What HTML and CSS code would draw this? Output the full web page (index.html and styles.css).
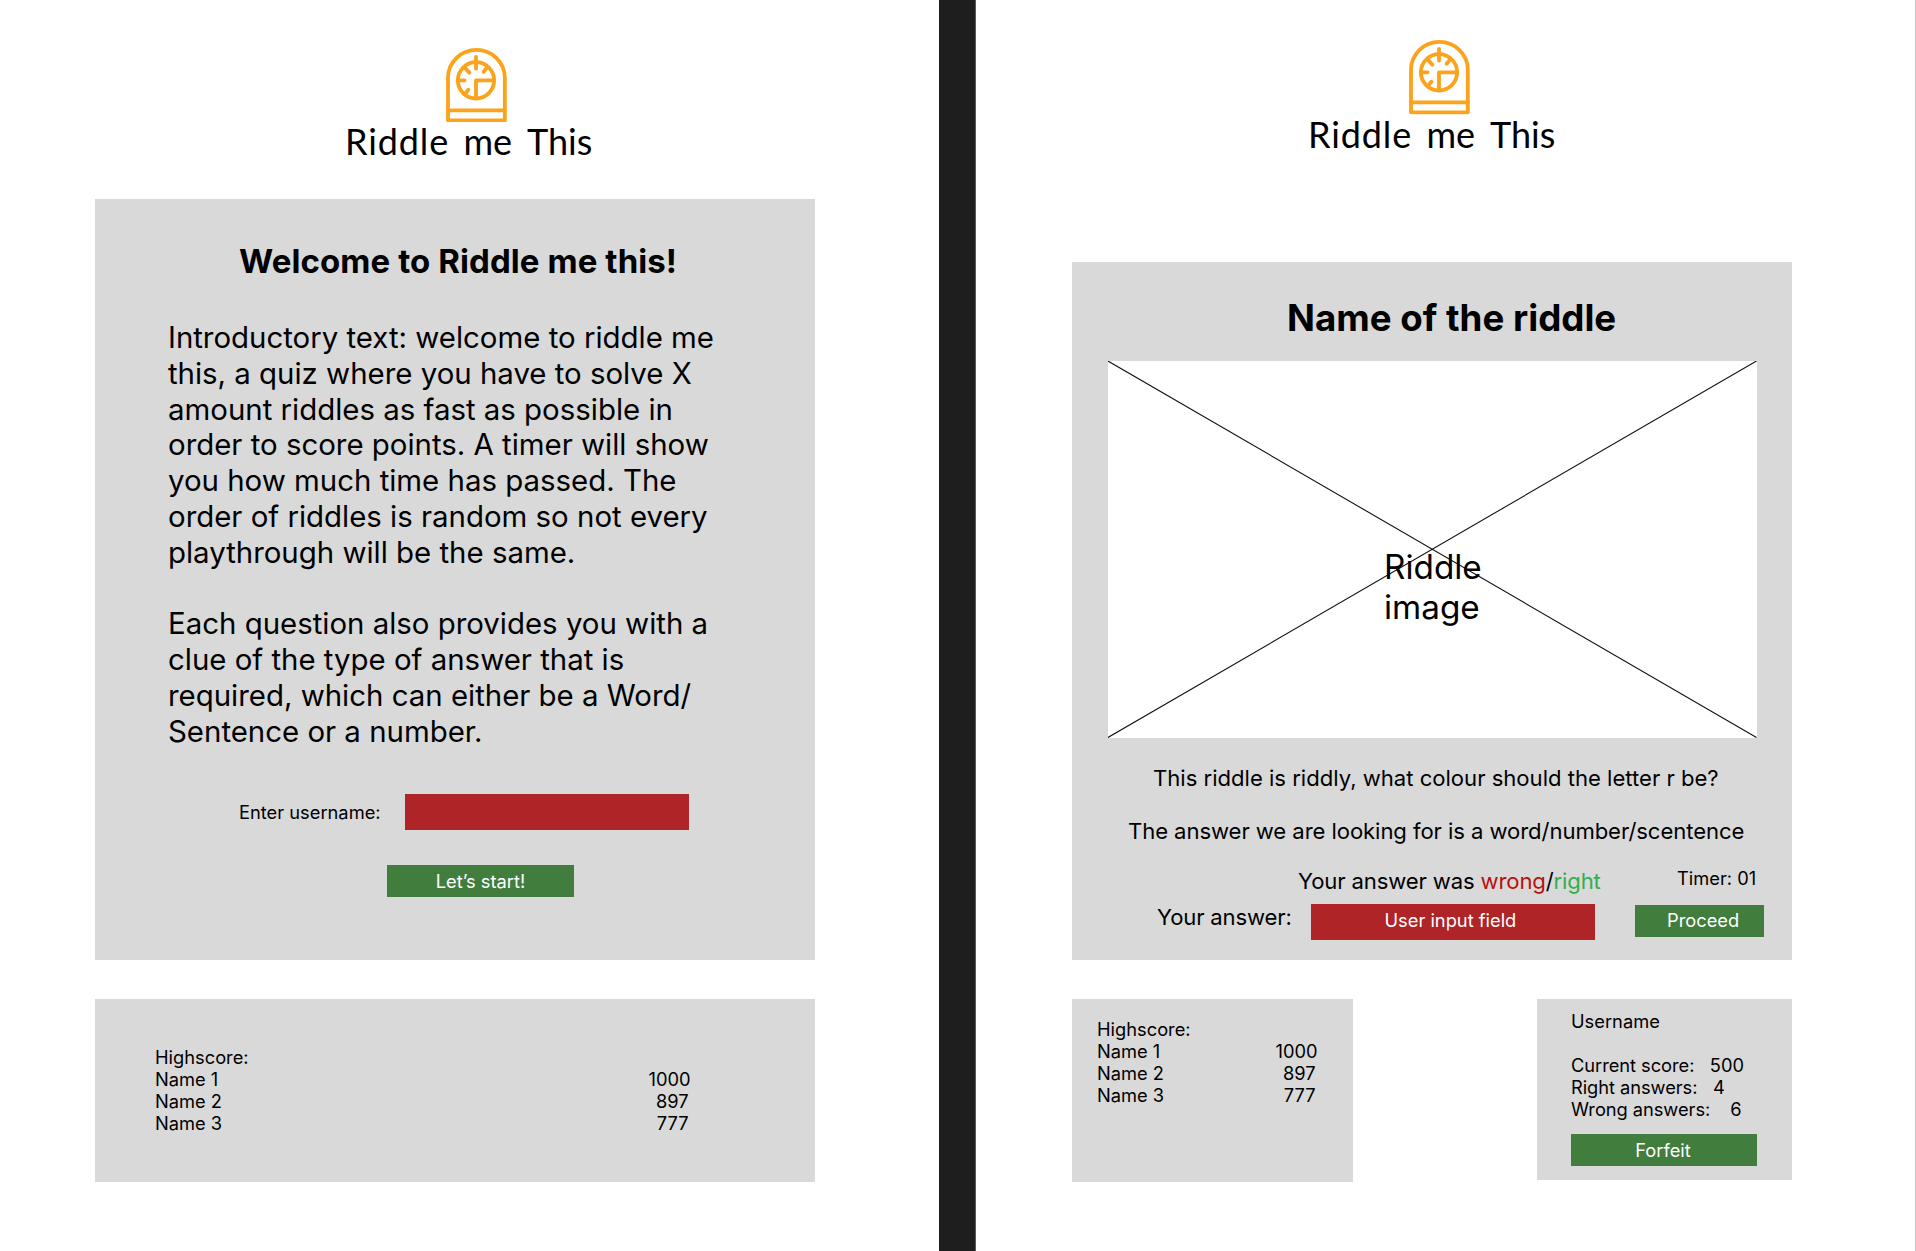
FILE: index.html
```html
<!DOCTYPE html>
<html lang="en">
<head>
<meta charset="utf-8">
<title>Riddle me This</title>
<link rel="stylesheet" href="styles.css">
</head>
<body>
<svg class="symbols" aria-hidden="true">
  <symbol id="clock" viewBox="348 53 183 224">
    <g fill="none" stroke="#fba31b" stroke-width="11.5" stroke-linecap="round" stroke-linejoin="round">
      <path d="M354 270V142a85 83 0 0 1 170.500 0V270Z"/>
      <path d="M354 240H524"/>
      <circle cx="438" cy="150" r="54.500"/>
      <path d="M438 80V115M438 198V150H488M405 113L418 127M470 113L461 124M387 150H404M405 190L415 178"/>
    </g>
  </symbol>
</svg>
<main class="screens">
  <section class="screen start">
    <header class="brand">
      <svg class="brand-icon"><use href="#clock"/></svg>
      <div class="brand-name"><span class="w1">Riddle</span><span class="w2">me</span><span class="w3">This</span></div>
    </header>
    <article class="panel welcome">
      <h1 class="welcome-title">Welcome to Riddle me this!</h1>
      <p class="intro">Introductory text: welcome to riddle me<br>this, a quiz where you have to solve X<br>amount riddles as fast as possible in<br>order to score points. A timer will show<br>you how much time has passed. The<br>order of riddles is random so not every<br>playthrough will be the same.</p>
      <p class="intro">Each question also provides you with a<br>clue of the type of answer that is<br>required, which can either be a Word/<br>Sentence or a number.</p>
      <div class="username-row">
        <span class="username-label">Enter username:</span>
        <div class="field"></div>
      </div>
      <div class="button start-button">Let’s start!</div>
    </article>
    <section class="panel scores wide">
      <div class="names">Highscore:<br>Name 1<br>Name 2<br>Name 3</div>
      <div class="points"><span>1000</span><span class="short">897</span><span class="short">777</span></div>
    </section>
  </section>
  <section class="screen game">
    <header class="brand">
      <svg class="brand-icon"><use href="#clock"/></svg>
      <div class="brand-name"><span class="w1">Riddle</span><span class="w2">me</span><span class="w3">This</span></div>
    </header>
    <article class="panel riddle">
      <h1 class="riddle-title">Name of the riddle</h1>
      <div class="picture">
        <svg class="cross" viewBox="0 0 649 377" preserveAspectRatio="none"><path d="M0 0L648.500 376.500M0 376.500L648.500 0" stroke="#111" stroke-width="1.100"/></svg>
        <div class="picture-label">Riddle<br>image</div>
      </div>
      <p class="question">This riddle is riddly, what colour should the letter r be?</p>
      <p class="hint">The answer we are looking for is a word/number/scentence</p>
      <div class="status-row">
        <span class="result">Your answer was <span class="wrong">wrong</span>/<span class="right">right</span></span>
        <span class="timer">Timer: 01</span>
      </div>
      <div class="answer-row">
        <span class="answer-label">Your answer:</span>
        <div class="field"><span class="field-text">User input field</span></div>
        <div class="button proceed"><span class="proceed-text">Proceed</span></div>
      </div>
    </article>
    <div class="footer-row">
      <section class="panel scores compact">
        <div class="names">Highscore:<br>Name 1<br>Name 2<br>Name 3</div>
        <div class="points"><span>1000</span><span class="short">897</span><span class="short">777</span></div>
      </section>
      <section class="panel player">
        <div class="player-name">Username</div>
        <div class="stat"><span>Current score:</span><span class="v500">500</span></div>
        <div class="stat"><span>Right answers:</span><span class="v4">4</span></div>
        <div class="stat"><span>Wrong answers:</span><span class="v6">6</span></div>
        <div class="button forfeit">Forfeit</div>
      </section>
    </div>
  </section>
</main>
</body>
</html>
```
FILE: styles.css
```css
* { box-sizing: border-box; }
body {
  margin: 0;
  background: #1e1e1e;
  color: #000;
  font: 18.3px/22px Inter, "Liberation Sans", sans-serif;
  white-space: nowrap;
}
h1, p { margin: 0; }
.symbols { position: absolute; width: 0; height: 0; }
.screens {
  display: grid;
  grid-template-columns: 939px 940px;
  column-gap: 36px;
  width: 1916px;
  height: 1251px;
  overflow: hidden;
  background: linear-gradient(90deg, #1e1e1e 1915px, #c4c4c4 1915px);
}
.screen { display: flex; flex-direction: column; background: #fff; }
.start { padding-left: 95px; }
.game { padding-left: 96px; border-left: 1px solid #5c5c5c; }
.panel { background: #d9d9d9; width: 720px; display: flex; }

/* Brand */
.brand { display: flex; flex-direction: column; }
.brand-icon { width: 61px; height: 74.700px; flex: none; }
.brand-name {
  display: flex;
  height: 44px;
  margin-top: -3px;
  font: 36px/44px Lato, sans-serif;
}
.start .brand { height: 199px; padding: 47.700px 0 0 250px; }
.start .brand-icon { margin-left: 101px; }
.game .brand { height: 262px; padding: 40.300px 0 0 236px; }
.game .brand-icon { margin-left: 101px; }
.w1 { width: 118.500px; letter-spacing: 0.900px; }
.w2 { width: 63.500px; }

/* Welcome panel */
.welcome { height: 761px; flex-direction: column; padding-top: 42px; }
.welcome-title { font-size: 33px; line-height: 40px; font-weight: 700; letter-spacing: 0.090px; margin: 0 0 39px 144px; }
.intro { font-size: 29.450px; line-height: 35.790px; letter-spacing: -0.020px; margin: 0 0 35.790px 73px; }
.username-row { display: flex; margin: 9px 0 35px 144px; }
.username-label { width: 166px; padding-top: 7px; }
.field { width: 284px; height: 36px; background: #ae2427; color: #fff; }
.button { height: 32px; background: #417d3d; color: #fff; line-height: 32px; text-align: center; }
.start-button { width: 187px; margin-left: 292px; }

/* Score panels */
.scores { height: 183.500px; }
.wide { margin-top: 38.500px; padding: 47px 0 0 60px; }
.points { display: flex; flex-direction: column; align-items: flex-end; padding-top: 22px; }
.short { padding-right: 2px; }
.names { width: 493.500px; }
.compact { width: 281px; padding: 19px 0 0 25px; }
.compact .names { width: 178.500px; }

/* Riddle panel */
.riddle { height: 698px; flex-direction: column; padding-top: 34px; }
.riddle-title { font-size: 36.700px; line-height: 44px; font-weight: 700; margin-left: 215px; }
.picture { display: grid; width: 649px; height: 377px; margin: 21px 0 0 36px; background: #fff; }
.cross, .picture-label { grid-area: 1 / 1; }
.cross { width: 649px; height: 377px; }
.picture-label { font-size: 33.300px; line-height: 40.300px; padding: 186px 0 0 276px; }
.question, .hint, .result, .answer-label { font-size: 22.080px; line-height: 27px; }
.question { margin: 27px 0 26px 81px; }
.hint { margin-left: 56px; letter-spacing: -0.070px; }
.status-row { display: flex; height: 27px; margin: 22.500px 0 9.500px 226px; }
.result { width: 379px; letter-spacing: -0.130px; }
.timer { margin-top: -0.500px; }
.wrong { color: #b90f0f; }
.right { color: #2fb04c; }
.answer-row { display: flex; padding-left: 85px; }
.answer-label { width: 153.500px; letter-spacing: -0.150px; }
.field-text { display: block; padding: 5px 0 0 74px; }
.proceed { width: 129px; margin: 1px 0 0 40.500px; text-align: left; padding-left: 32px; line-height: 31px; }

/* Footer */
.footer-row { display: flex; align-items: flex-start; justify-content: space-between; width: 720px; margin-top: 38.500px; }
.player { width: 255px; height: 181.500px; flex-direction: column; padding: 11.500px 0 0 34px; }
.player-name { margin-bottom: 22px; }
.stat { display: flex; letter-spacing: -0.050px; }
.v500 { margin-left: 15.500px; }
.v4 { margin-left: 15.500px; }
.v6 { margin-left: 20px; }
.forfeit { width: 186px; margin-top: 13.500px; padding-right: 2px; }
```
